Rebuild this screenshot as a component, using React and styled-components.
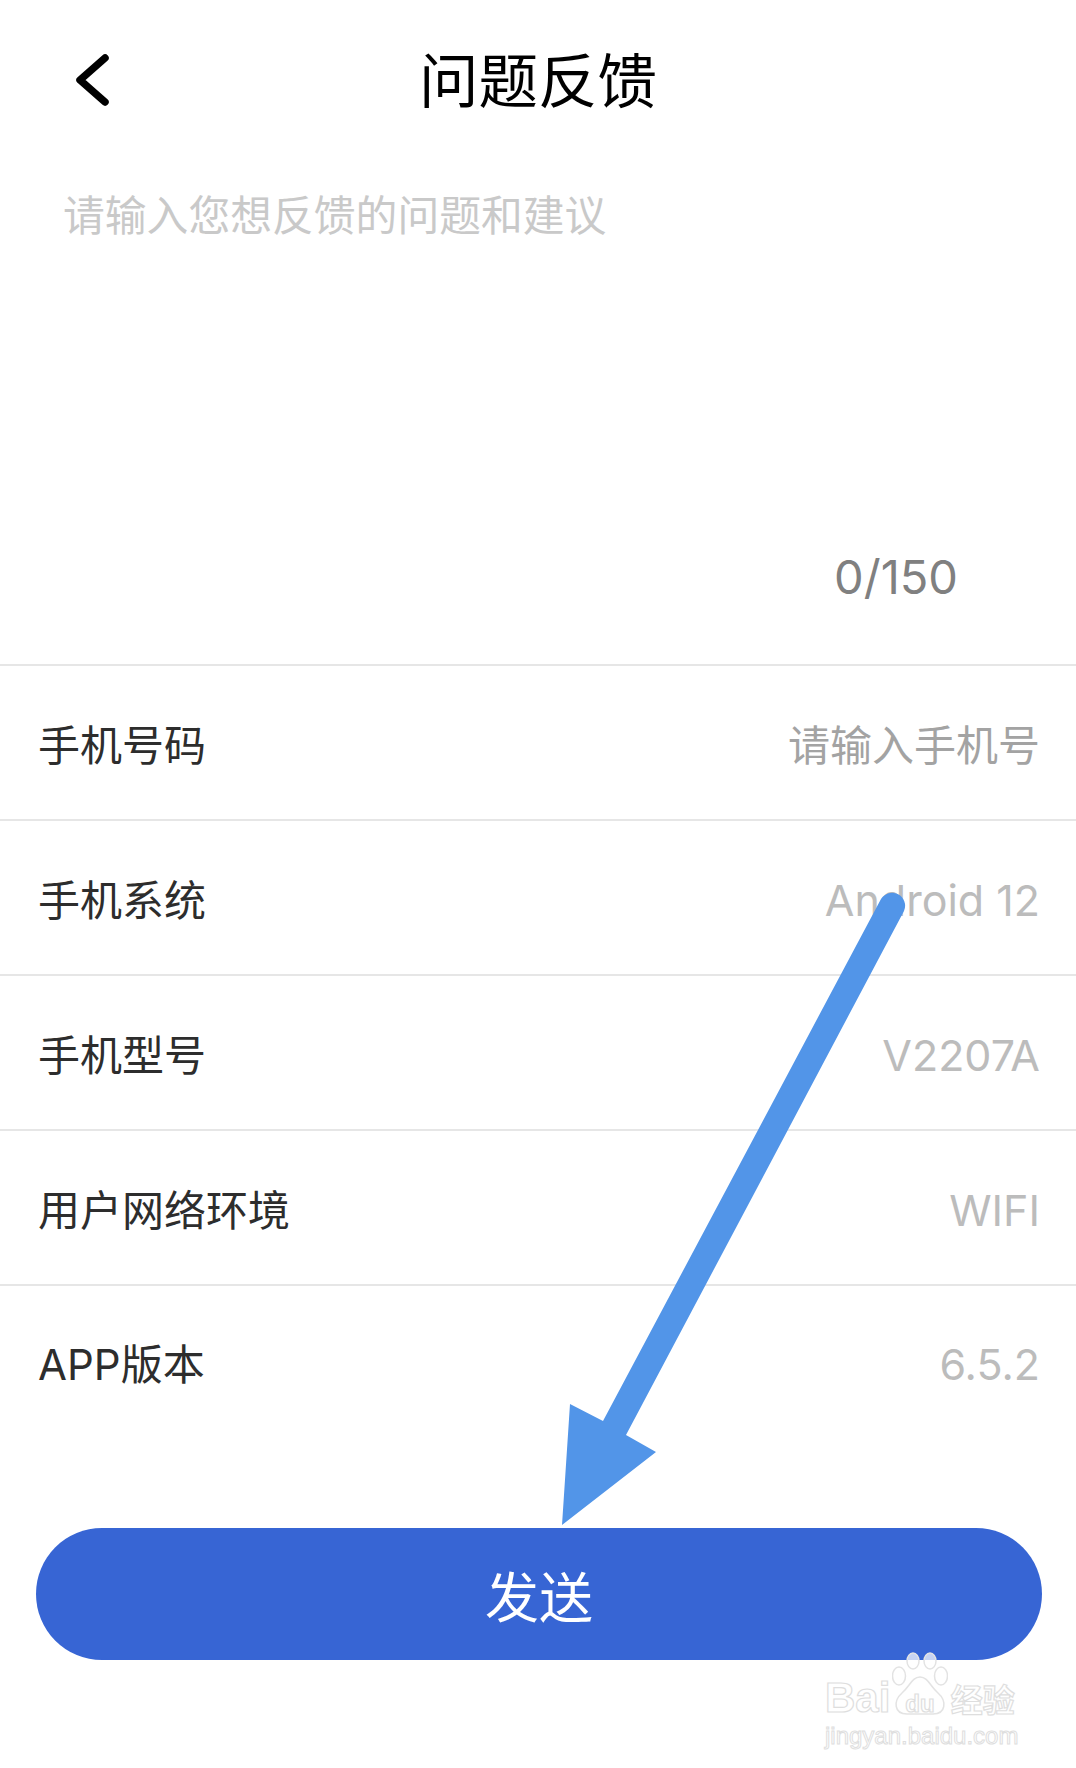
import styled, { createGlobalStyle } from "styled-components";

const GlobalStyle = createGlobalStyle`
  html, body {
    margin: 0;
    padding: 0;
    background: #fff;
  }
  body {
    font-family: Inter, "Noto Sans CJK SC", sans-serif;
  }
`;

const rows = [
  { label: "手机号码", value: "请输入手机号", dim: false },
  { label: "手机系统", value: "Android 12", dim: true },
  { label: "手机型号", value: "V2207A", dim: true },
  { label: "用户网络环境", value: "WIFI", dim: true },
  { label: "APP版本", value: "6.5.2", dim: true },
];

export default function App() {
  return (
    <Page>
      <GlobalStyle />
      <Header>
        <BackButton>
          <svg width="40" height="52" viewBox="0 0 40 52" fill="none">
            <path
              d="M33 4 L8 26 L33 48"
              stroke="#000"
              strokeWidth="7.5"
              strokeLinecap="round"
              strokeLinejoin="round"
            />
          </svg>
        </BackButton>
        <Title>问题反馈</Title>
      </Header>

      <Editor>
        <Placeholder>请输入您想反馈的问题和建议</Placeholder>
        <Counter>0/150</Counter>
      </Editor>

      <List>
        {rows.map((row) => (
          <Row key={row.label}>
            <Label>{row.label}</Label>
            <Value $dim={row.dim}>{row.value}</Value>
          </Row>
        ))}
      </List>

      <Footer>
        <SendButton>发送</SendButton>
      </Footer>

      <ArrowMark width="1076" height="1768" viewBox="0 0 1076 1768">
        <path
          d="M881 899 a13 13 0 0 1 23 12 L626 1435 L656 1452 L562 1525 L570 1404 L603 1421 Z"
          fill="#5295e8"
        />
      </ArrowMark>

      <Watermark>
        <Paw width="56" height="64" viewBox="0 0 56 64" fill="rgba(255,255,255,0.72)" stroke="#e3e3e3" strokeWidth="1.5">
          <ellipse cx="21" cy="9" rx="6" ry="8" />
          <ellipse cx="38" cy="9" rx="6" ry="8" />
          <ellipse cx="7" cy="24" rx="6.5" ry="9" />
          <ellipse cx="49" cy="24" rx="6.5" ry="9" />
          <path d="M28 25 C20 25 18 34 10 41 C1 49 2 62 15 62 L41 62 C54 62 55 49 46 41 C38 34 36 25 28 25 Z" />
        </Paw>
        <BrandLine>
          <span>Bai</span>
          <BrandDu>du</BrandDu>
          <BrandCn>经验</BrandCn>
        </BrandLine>
        <SiteLine>jingyan.baidu.com</SiteLine>
      </Watermark>
    </Page>
  );
}

const Page = styled.div`
  position: relative;
  width: 1076px;
  height: 1768px;
  overflow: hidden;
  background: #fff;
`;

const Header = styled.header`
  position: relative;
  display: flex;
  align-items: center;
  justify-content: center;
  height: 162px;
  padding-top: 2px;
  box-sizing: border-box;
`;

const BackButton = styled.div`
  position: absolute;
  left: 72px;
  top: 54px;
  line-height: 0;
`;

const Title = styled.h1`
  margin: 0;
  font-size: 59.5px;
  font-weight: 400;
  line-height: 1;
  color: #000;
`;

const Editor = styled.section`
  display: flex;
  flex-direction: column;
  justify-content: space-between;
  height: 504px;
  box-sizing: border-box;
  padding: 31px 118px 61px 63px;
  border-bottom: 2px solid #e6e6e6;
`;

const Placeholder = styled.div`
  font-size: 41.8px;
  line-height: 46px;
  color: #c9c9c9;
`;

const Counter = styled.div`
  align-self: flex-end;
  font-size: 47px;
  line-height: 52px;
  color: #808080;
`;

const List = styled.div`
  display: flex;
  flex-direction: column;
`;

const Row = styled.div`
  display: flex;
  align-items: center;
  justify-content: space-between;
  height: 155px;
  box-sizing: border-box;
  padding: 0 36px 0 38px;
  border-bottom: 2px solid #e6e6e6;

  &:last-child {
    border-bottom: none;
    padding-bottom: 4px;
  }
`;

const Label = styled.span`
  font-size: 42px;
  color: #2d2d2d;
`;

const Value = styled.span`
  font-size: ${(p) => (p.$dim ? "43px" : "42px")};
  padding-top: ${(p) => (p.$dim ? "4px" : "0")};
  color: ${(p) => (p.$dim ? "#bcbcbc" : "#a3a3a3")};
`;

const Footer = styled.div`
  display: flex;
  padding: 87px 34px 0 36px;
`;

const SendButton = styled.div`
  flex: 1;
  display: flex;
  align-items: center;
  justify-content: center;
  height: 132px;
  border-radius: 66px;
  background: #3765d4;
  color: #fff;
  font-size: 54px;
`;

const ArrowMark = styled.svg`
  position: absolute;
  left: 0;
  top: 0;
  pointer-events: none;
`;

const Watermark = styled.div`
  position: absolute;
  left: 825px;
  top: 1652px;
  width: 200px;
`;

const Paw = styled.svg`
  position: absolute;
  left: 67px;
  top: 0;
`;

const BrandLine = styled.div`
  position: relative;
  display: flex;
  align-items: baseline;
  margin-top: 22px;
  white-space: nowrap;
  font-family: "Liberation Sans", "Noto Sans CJK SC", sans-serif;
  font-size: 42px;
  line-height: 48px;
  font-weight: 700;
  color: rgba(255, 255, 255, 0.9);
  -webkit-text-stroke: 1.2px #dedede;
`;

const BrandDu = styled.span`
  font-size: 24px;
  margin: 0 16px 0 15px;
`;

const BrandCn = styled.span`
  font-size: 32px;
`;

const SiteLine = styled.div`
  position: relative;
  margin-top: -7px;
  font-family: "Liberation Sans", sans-serif;
  font-size: 24px;
  line-height: 30px;
  white-space: nowrap;
  color: rgba(255, 255, 255, 0.9);
  -webkit-text-stroke: 1px #dedede;
`;
